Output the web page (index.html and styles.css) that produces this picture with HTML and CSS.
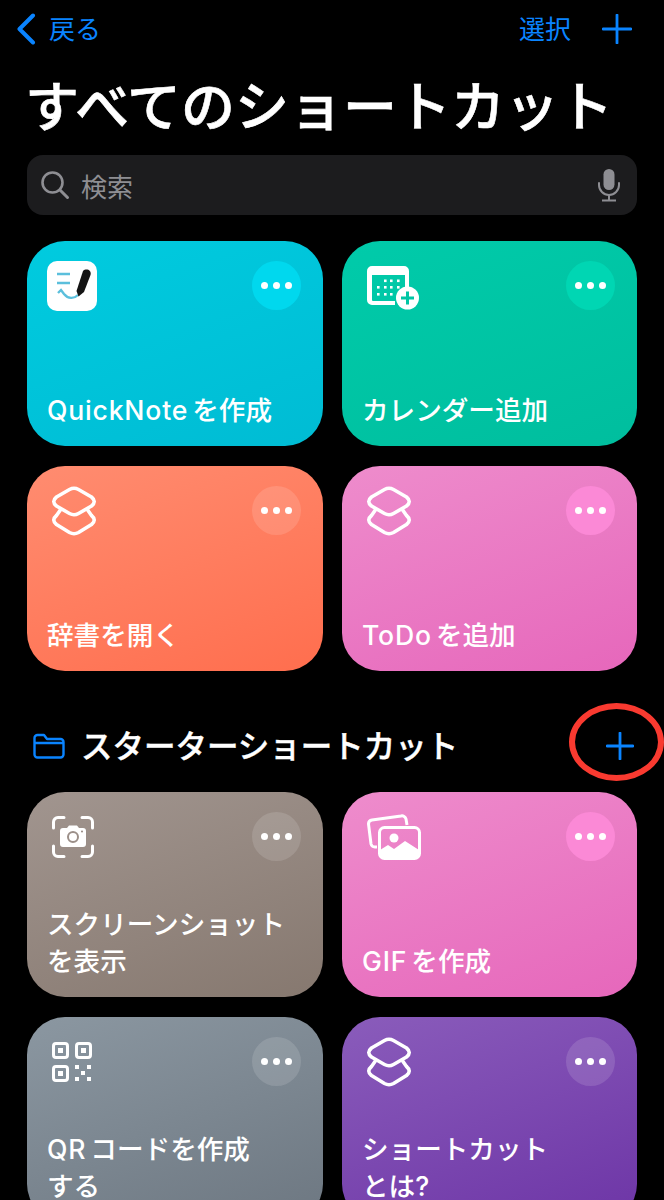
FILE: index.html
```html
<!DOCTYPE html>
<html lang="ja">
<head>
    <meta charset="UTF-8">
    <title>すべてのショートカット</title>
    <link rel="stylesheet" href="styles.css">
</head>
<body>
<div class="page">
    <!-- nav -->
    <div class="nav">
        <div class="nav-back">
            <svg class="chevron" width="20" height="32" viewBox="0 0 20 32"><path d="M17 2.500 L3.500 16 L17 29.500" fill="none" stroke="#0a84ff" stroke-width="4" stroke-linecap="round" stroke-linejoin="round"/></svg>
            <span>戻る</span>
        </div>
        <div class="nav-right">
            <span>選択</span>
            <svg class="nav-plus" width="30" height="30" viewBox="0 0 30 30"><path d="M15 1 V29 M1 15 H29" stroke="#0a84ff" stroke-width="2.800" stroke-linecap="round"/></svg>
        </div>
    </div>

    <h1 class="title">すべてのショートカット</h1>

    <div class="search">
        <svg width="30" height="30" viewBox="0 0 30 30"><circle cx="12.500" cy="12.500" r="10" fill="none" stroke="#8e8e93" stroke-width="2.600"/><path d="M20 20 L27.500 27.500" stroke="#8e8e93" stroke-width="3" stroke-linecap="round"/></svg>
        <span class="search-text">検索</span>
        <svg class="mic" width="24" height="34" viewBox="0 0 24 34"><rect x="6.500" y="1" width="11" height="21" rx="5.500" fill="#8e8e93"/><path d="M2 15 V17 A10 10 0 0 0 22 17 V15" fill="none" stroke="#8e8e93" stroke-width="2" stroke-linecap="round"/><path d="M12 27 V32 M5 32.500 H19" stroke="#8e8e93" stroke-width="2"/></svg>
    </div>

    <div class="grid">
        <div class="card teal">
            <div class="card-top">
                <svg class="icon" width="50" height="50" viewBox="0 0 50 50">
                    <rect width="50" height="50" rx="10" fill="#fff"/>
                    <path d="M10 13 H23 M10 22 H23" stroke="#5bbfdc" stroke-width="2.400" fill="none"/>
                    <path d="M11 32 L14 29 L17 33 C21 38 27 38 31 34" stroke="#5bbfdc" stroke-width="2.400" fill="none"/>
                    <path d="M36 10 C39 7 45 9 43.500 14 L37 31 L31.500 35.500 L29.500 30 Z" fill="#141414"/>
                </svg>
                <div class="more"><i></i><i></i><i></i></div>
            </div>
            <div class="label"><span class="latin">QuickNote</span> を作成</div>
        </div>
        <div class="card green">
            <div class="card-top">
                <svg class="icon cal" width="54" height="46" viewBox="0 0 54 46">
                    <path fill="#fff" d="M5 1 H37 A5 5 0 0 1 42 6 V24 H38 V10 H5 V35 A1 1 0 0 0 6 36 H28 V40 H5 A5 5 0 0 1 0 35 V6 A5 5 0 0 1 5 1 Z"/>
                    <g fill="#fff">
                        <rect x="17" y="14.500" width="2.600" height="2.600"/><rect x="23" y="14.500" width="2.600" height="2.600"/><rect x="30" y="14.500" width="2.600" height="2.600"/>
                        <rect x="10" y="21" width="2.600" height="2.600"/><rect x="17" y="21" width="2.600" height="2.600"/><rect x="23" y="21" width="2.600" height="2.600"/><rect x="30" y="21" width="2.600" height="2.600"/>
                        <rect x="10" y="28" width="2.600" height="2.600"/><rect x="17" y="28" width="2.600" height="2.600"/><rect x="23" y="28" width="2.600" height="2.600"/>
                    </g>
                    <circle cx="40.500" cy="33" r="11.500" fill="#fff"/>
                    <path d="M40.500 26.500 V39.500 M34 33 H47" stroke="#00c6a5" stroke-width="3"/>
                </svg>
                <div class="more"><i></i><i></i><i></i></div>
            </div>
            <div class="label">カレンダー追加</div>
        </div>
        <div class="card orange">
            <div class="card-top">
                <svg class="icon layers" width="46" height="50" viewBox="0 0 46 50"><use href="#layers"/></svg>
                <div class="more"><i></i><i></i><i></i></div>
            </div>
            <div class="label">辞書を開く</div>
        </div>
        <div class="card pink">
            <div class="card-top">
                <svg class="icon layers" width="46" height="50" viewBox="0 0 46 50"><use href="#layers"/></svg>
                <div class="more"><i></i><i></i><i></i></div>
            </div>
            <div class="label"><span class="latin">ToDo</span> を追加</div>
        </div>
    </div>

    <div class="section">
        <svg class="folder" width="32" height="26" viewBox="0 0 32 26"><path d="M1.500 5 A3 3 0 0 1 4.500 2 H11 L14 6 H27.500 A3 3 0 0 1 30.500 9 V21.500 A3 3 0 0 1 27.500 24.500 H4.500 A3 3 0 0 1 1.500 21.500 Z M1.500 10 H30.500" fill="none" stroke="#0a84ff" stroke-width="2.400" stroke-linejoin="round"/></svg>
        <h2 class="section-title">スターターショートカット</h2>
        <svg class="section-plus" width="28" height="28" viewBox="0 0 28 28"><path d="M14 1 V27 M1 14 H27" stroke="#0a84ff" stroke-width="2.800" stroke-linecap="round"/></svg>
        <div class="circle-mark"></div>
    </div>

    <div class="grid">
        <div class="card taupe">
            <div class="card-top">
                <svg class="icon shot" width="42" height="42" viewBox="0 0 42 42">
                    <path d="M1.500 12 V6 A4.500 4.500 0 0 1 6 1.500 H12 M30 1.500 H36 A4.500 4.500 0 0 1 40.500 6 V12 M40.500 30 V36 A4.500 4.500 0 0 1 36 40.500 H30 M12 40.500 H6 A4.500 4.500 0 0 1 1.500 36 V30" fill="none" stroke="#fff" stroke-width="3" stroke-linecap="round"/>
                    <path fill="#fff" fill-rule="evenodd" d="M11 12 H15 L17 9.500 H25 L27 12 H31 A3 3 0 0 1 34 15 V28 A3 3 0 0 1 31 31 H11 A3 3 0 0 1 8 28 V15 A3 3 0 0 1 11 12 Z M21 15 A6 6 0 1 0 21 27 A6 6 0 1 0 21 15 Z"/>
                    <circle cx="21" cy="21" r="4" fill="#fff"/>
                    <circle cx="30" cy="15.500" r="1" fill="#948780"/>
                </svg>
                <div class="more"><i></i><i></i><i></i></div>
            </div>
            <div class="label">スクリーンショット<br>を表示</div>
        </div>
        <div class="card pink">
            <div class="card-top">
                <svg class="icon photos" width="54" height="46" viewBox="0 0 54 46">
                    <path d="M10 33 H8 A4 4 0 0 1 4 30 L1.500 10 A4 4 0 0 1 5 6 L34 2 A4 4 0 0 1 39 5 L40 11" fill="none" stroke="#fff" stroke-width="3"/>
                    <rect x="12.500" y="13.500" width="40" height="31" rx="5" fill="none" stroke="#fff" stroke-width="3"/>
                    <circle cx="27" cy="24" r="4.500" fill="#fff"/>
                    <path d="M13 36 L21 31 L27 35 L38 27 L52 36 V40 A4 4 0 0 1 48 44 H17 A4 4 0 0 1 13 40 Z" fill="#fff"/>
                </svg>
                <div class="more"><i></i><i></i><i></i></div>
            </div>
            <div class="label"><span class="latin">GIF</span> を作成</div>
        </div>
        <div class="card slate">
            <div class="card-top">
                <svg class="icon qr" width="40" height="40" viewBox="0 0 40 40">
                    <g fill="none" stroke="#fff" stroke-width="3">
                        <rect x="1.500" y="1.500" width="14" height="14" rx="2.500"/>
                        <rect x="24.500" y="1.500" width="14" height="14" rx="2.500"/>
                        <rect x="1.500" y="24.500" width="14" height="14" rx="2.500"/>
                    </g>
                    <g fill="#fff">
                        <rect x="6" y="6" width="5" height="5"/><rect x="29" y="6" width="5" height="5"/><rect x="6" y="29" width="5" height="5"/>
                        <rect x="23" y="23" width="4" height="4"/><rect x="35" y="23" width="4" height="4"/><rect x="29" y="29" width="4" height="4"/><rect x="23" y="35" width="4" height="4"/><rect x="35" y="35" width="4" height="4"/>
                    </g>
                </svg>
                <div class="more"><i></i><i></i><i></i></div>
            </div>
            <div class="label"><span class="latin">QR</span> コードを作成<br>する</div>
        </div>
        <div class="card purple">
            <div class="card-top">
                <svg class="icon layers" width="46" height="50" viewBox="0 0 46 50"><use href="#layers"/></svg>
                <div class="more"><i></i><i></i><i></i></div>
            </div>
            <div class="label">ショートカット<br>とは?</div>
        </div>
    </div>
</div>

<svg class="defs" width="0" height="0">
    <defs>
        <g id="layers" fill="none" stroke="#fff" stroke-width="3.600" stroke-linejoin="round" stroke-linecap="round">
            <path d="M18.500 3.500 Q23 1 27.500 3.500 L40.500 11 Q46 15.500 40.500 20 L27.500 27.500 Q23 30 18.500 27.500 L5.500 20 Q0 15.500 5.500 11 Z"/>
            <path d="M9 24.500 L5.500 29.500 Q0 34 5.500 38.500 L18.500 46.500 Q23 49 27.500 46.500 L40.500 38.500 Q46 34 40.500 29.500 L37 24.500"/>
        </g>
    </defs>
</svg>
</body>
</html>
```

FILE: styles.css
```css
* {
    margin: 0;
    padding: 0;
    box-sizing: border-box;
}

html, body {
    height: 1200px;
    overflow: hidden;
    background: #000;
}

body {
    font-family: "Noto Sans CJK JP", "Inter", sans-serif;
    color: #fff;
}

.page {
    padding: 0 27px;
}

/* nav */
.nav {
    display: flex;
    justify-content: space-between;
    align-items: center;
    height: 58px;
    color: #0a84ff;
    font-size: 26px;
}

.nav span {
    margin-top: -4px;
}

.nav-back {
    display: flex;
    align-items: center;
    gap: 13px;
    margin-left: -11px;
}

.nav-right {
    display: flex;
    align-items: center;
    gap: 31px;
    margin-right: 5px;
}

.title {
    margin: 15px 0 0 -2px;
    height: 82px;
    font-size: 54px;
    line-height: 62px;
    font-weight: 500;
    -webkit-text-stroke: 0.6px #fff;
    white-space: nowrap;
}

/* search */
.search {
    display: flex;
    align-items: center;
    height: 60px;
    padding: 0 16px 0 13px;
    border-radius: 16px;
    background: #1c1c1e;
}

.search-text {
    margin-left: 11px;
    flex: 1;
    font-size: 26px;
    color: #8e8e93;
}

/* cards */
.grid {
    display: grid;
    grid-template-columns: 296px 295px;
    grid-auto-rows: 205px;
    gap: 20px 19px;
    margin-top: 26px;
}

.card {
    display: flex;
    flex-direction: column;
    justify-content: space-between;
    padding: 20px 22px 17px 20px;
    border-radius: 38px;
}

.card-top {
    display: flex;
    justify-content: space-between;
    align-items: flex-start;
}

.layers {
    margin: 0 0 0 4px;
}

.cal {
    margin: 4px 0 0 5px;
}

.shot {
    margin: 4px 0 0 5px;
}

.photos {
    margin: 2px 0 0 5px;
}

.qr {
    margin: 5px 0 0 5px;
}

.more {
    display: flex;
    justify-content: center;
    align-items: center;
    gap: 5px;
    width: 49px;
    height: 49px;
    border-radius: 50%;
    background: rgba(255, 255, 255, 0.13);
}

.more i {
    width: 7px;
    height: 7px;
    border-radius: 50%;
    background: #fff;
}

.label {
    font-family: "Inter", "Noto Sans CJK JP", sans-serif;
    font-size: 26.600px;
    font-weight: 500;
    line-height: 37px;
    word-spacing: -3px;
    white-space: nowrap;
}

.latin {
    letter-spacing: 0.8px;
}

.teal { background: linear-gradient(160deg, #00cbdf, #00bcd4); }
.teal .more { background: #00d8ee; }
.green { background: linear-gradient(160deg, #00cbaa, #00be9e); }
.green .more { background: #00d6b3; }
.orange { background: linear-gradient(160deg, #ff8c70, #ff6e4e); }
.pink { background: linear-gradient(160deg, #ee8ccc, #e667bb); }
.pink .more { background: #fb89d6; }
.taupe { background: linear-gradient(160deg, #a1958f, #86786f); }
.slate { background: linear-gradient(160deg, #8b97a1, #6d7781); }
.purple { background: linear-gradient(160deg, #8a5cbb, #6d35a6); }

/* section header */
.section {
    position: relative;
    display: flex;
    align-items: center;
    height: 121px;
    margin-bottom: -26px;
    padding: 55px 0 26px;
}

.folder {
    margin-left: 6px;
}

.section-title {
    flex: 1;
    margin: -4px 0 0 16px;
    font-size: 31.500px;
    font-weight: 500;
    -webkit-text-stroke: 0.4px #fff;
    white-space: nowrap;
}

.section-plus {
    margin-right: 3px;
}

.circle-mark {
    position: absolute;
    right: -27px;
    top: 32px;
    width: 95px;
    height: 78px;
    border: 6px solid #f93a30;
    border-radius: 50%;
}

.defs {
    position: absolute;
}
```
